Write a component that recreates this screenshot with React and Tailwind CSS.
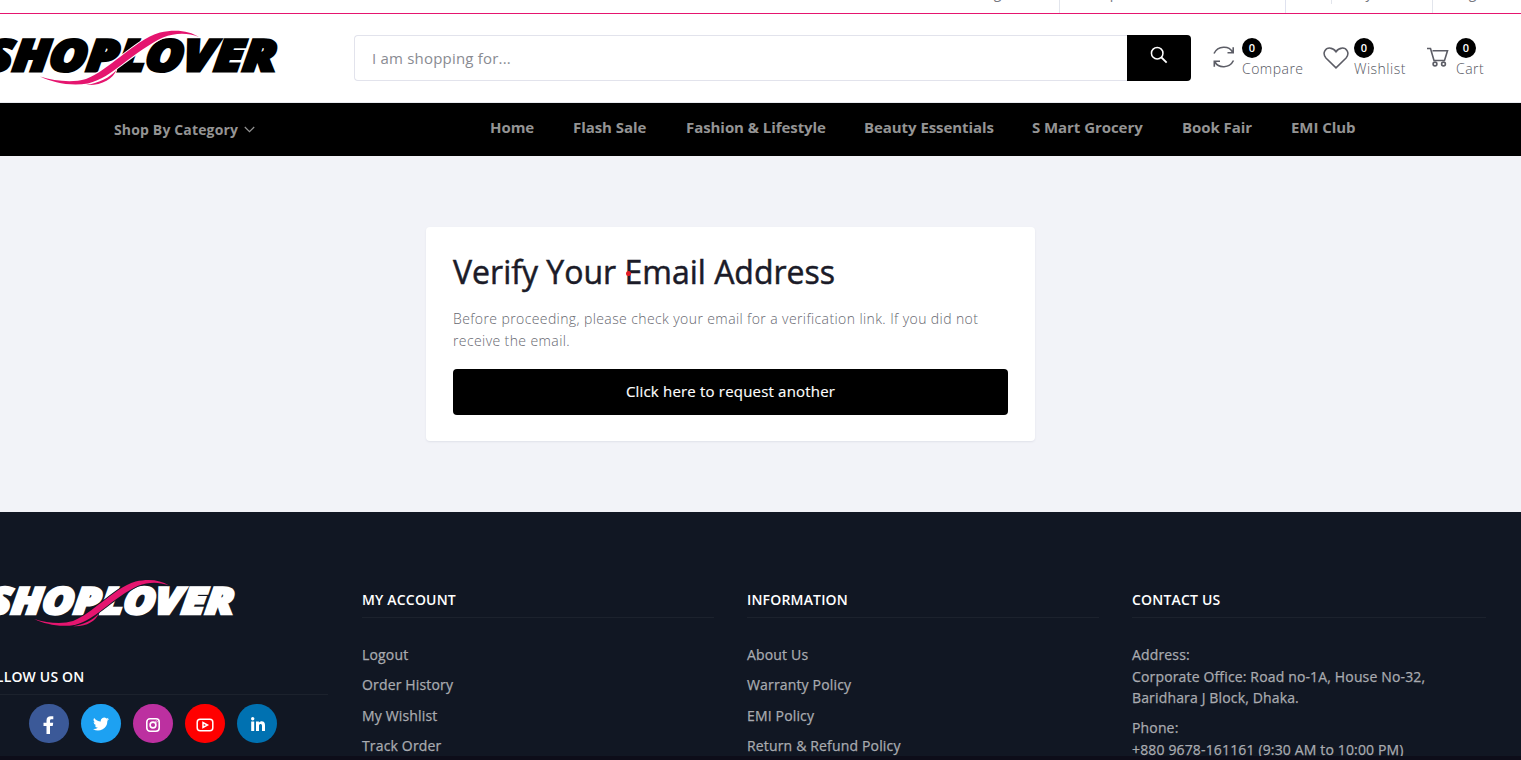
import React from "react";

const nav = [
  ["Home", "w-[83px]"],
  ["Flash Sale", "w-[113px]"],
  ["Fashion & Lifestyle", "w-[178px]"],
  ["Beauty Essentials", "w-[168px]"],
  ["S Mart Grocery", "w-[150px]"],
  ["Book Fair", "w-[109px]"],
  ["EMI Club", "w-[80px]"],
];

function Logo({ className, fill, gap }) {
  return (
    <svg viewBox="-30 0 310 60" className={className} preserveAspectRatio="none">
      <g transform="translate(0 46) skewX(-6)">
        <text
          x="-16" y="-0.8" textLength="291" lengthAdjust="spacingAndGlyphs"
          fontFamily="Open Sans" fontWeight="800" fontStyle="italic" fontSize="43.5"
          fill={fill} stroke={fill} strokeWidth="3.2" strokeLinejoin="miter"
        >SHOPLOVER</text>
      </g>
      <path d="M40 50.500C55 55 72 57 86 53C98 48.500 109 39 120 31C134 20.500 146 10.500 160 6.500C176 2.800 190 5 199 11C187 6.500 175 7 163 11.500C149 18 136 28 122 38.500C111 47 101 54 88 57.500C70 60.500 53 56.500 40 50.500Z" fill="#e5156f" stroke={gap} strokeWidth="2" paintOrder="stroke" />
      <path d="M86 59C98 57.500 110 51.500 116.500 44C113 53 101 60 86 59Z" fill="#e5156f" stroke={gap} strokeWidth="1.2" paintOrder="stroke" />
    </svg>
  );
}

function Action({ icon, label, className }) {
  return (
    <div className={`flex shrink-0 ${className}`}>
      {icon}
      <div className="flex flex-col items-start">
        <span className="flex h-5 w-5 items-center justify-center rounded-full bg-black text-[11px] font-semibold text-white">0</span>
        <span className="text-[14px] leading-[21px] font-light tracking-[0.48px] text-[#55575f]">{label}</span>
      </div>
    </div>
  );
}

const stroke = { fill: "none", stroke: "#5c5d66", strokeWidth: 1.6 };

function Column({ title, className, children }) {
  return (
    <div className={`shrink-0 ${className}`}>
      <h4 className="flex h-[38px] items-center border-b border-[#1c222d] pt-[1px] text-[14px] font-semibold tracking-[0.18px] text-white">{title}</h4>
      {children}
    </div>
  );
}

function Links({ items }) {
  return (
    <ul className="pt-[21px] text-[14px] tracking-[0.16px] text-[#a9abb0] [-webkit-text-stroke:0.25px_#a9abb0]">
      {items.map((t) => <li key={t} className="flex h-[30.45px] items-center">{t}</li>)}
    </ul>
  );
}

export default function App() {
  return (
    <div className="flex h-[760px] w-[1521px] flex-col overflow-hidden bg-[#f2f3f8] font-['Open_Sans',sans-serif]">
      <div className="h-[14px] shrink-0 overflow-hidden border-b border-[#e5156f] bg-white">
        <div className="flex h-[13px] pl-[976px] text-[14px] text-[#77787f]">
          <div className="w-[84px] border-r border-[#e2e5ec]"><span className="-mt-[18px] block pl-[2px]">Login</span></div>
          <div className="w-[226px] border-r border-[#dfe2ef]"><span className="-mt-[18px] block pl-[28px]">Help line</span></div>
          <div className="flex w-[147px] border-r border-[#e2e5ec]"><div className="h-1 w-[46px] border-r border-[#e2e5ec]" /><span className="-mt-[18px] block pl-[21px]">My Panel</span></div>
          <span className="-mt-[18px] block pl-[20px]">Logout</span>
        </div>
      </div>
      <header className="flex h-[88px] shrink-0 bg-white">
        <Logo className="-ml-[30px] mt-[12px] h-[60px] w-[310px] shrink-0" fill="#000" gap="#fff" />
        <div className="mt-[21px] ml-[74px] flex h-[46px] w-[837px] shrink-0">
          <div className="flex flex-1 items-center rounded-l border border-r-0 border-[#e2e3ec] pl-[17px] text-[15px] tracking-[0.2px] text-[#898b92]">I am shopping for...</div>
          <button className="flex w-16 items-center justify-center rounded-r bg-black pb-[6px]">
            <svg width="18" height="18" viewBox="0 0 20 20" fill="none" stroke="#fff" strokeWidth="1.7"><circle cx="8" cy="8" r="6.4" /><path d="M12.500 12.500L18.500 18.500" strokeWidth="2" /></svg>
          </button>
        </div>
        <div className="flex pt-[24px]">
          <Action className="ml-[20px] w-[112px]" label="Compare" icon={
            <svg className="mt-[7px] ml-[1px] mr-[6px] shrink-0" width="24" height="24" viewBox="0 0 24 24" {...stroke}><path d="M2 8.500C6 0.500 17 0.500 20.500 7M21.200 2.300V7.700H15.500M21.500 15.500C17.500 23.500 6.500 23.500 3 17M2.300 21.700V16.300H8" /></svg>} />
          <Action className="w-[103px]" label="Wishlist" icon={
            <svg className="mt-[8px] mr-[5px] shrink-0" width="26" height="24" viewBox="0 0 27 25" {...stroke}><path d="M13.500 22.800L3 12.500C-1.500 7 3 1.700 7.500 2.200C11 2.500 12.500 4.500 13.500 6C14.500 4.500 16 2.500 19.500 2.200C24 1.700 28.500 7 24 12.500Z" /></svg>} />
          <Action className="" label="Cart" icon={
            <svg className="mt-[9px] mr-[7px] ml-[1px] shrink-0" width="22" height="21" viewBox="0 0 22 21" {...stroke}><path d="M0 1.500H3.500L7 13.500H17.500L20.500 3.700H5.500" /><circle cx="8" cy="17" r="1.900" /><circle cx="16.500" cy="17" r="1.900" /></svg>} />
        </div>
      </header>
      <nav className="flex h-[54px] shrink-0 border-t border-[#e8ebf0] bg-black text-[15px] font-bold text-[#949494]">
        <div className="flex w-[490px] shrink-0 items-center gap-[6px] pl-[114px] text-[14px] tracking-[0.15px]">Shop By Category
          <svg width="11" height="7" viewBox="0 0 11 7" fill="none" stroke="#949494" strokeWidth="1.2"><path d="M.8 1L5.5 5.700L10.200 1" /></svg>
        </div>
        <div className="flex items-center pb-1 tracking-[-0.06px]">{nav.map(([t, w]) => <span key={t} className={`shrink-0 whitespace-nowrap ${w}`}>{t}</span>)}</div>
      </nav>
      <main className="h-[356px] shrink-0 pt-[71px] pl-[426px]">
        <section className="h-[214px] w-[609px] rounded bg-white px-[27px] pt-[25px] shadow-[0_1px_2px_#dfe1e9]">
          <div className="relative">
            <h1 className="text-[32px] leading-[40px] font-normal text-[#1b1b28] [-webkit-text-stroke:0.5px_#1b1b28]">Verify Your Email Address</h1>
            <span className="absolute top-[19px] left-[173px] h-[5px] w-[5px] rounded-full bg-[#e41b23]" />
          </div>
          <p className="mt-[16px] w-[545px] text-[14px] leading-[22px] font-light tracking-[0.4px] text-[#66676f]">Before proceeding, please check your email for a verification link. If you did not receive the email.</p>
          <button className="mt-[17px] h-[46px] w-[555px] rounded bg-black pb-[2px] text-[15px] tracking-[0.19px] text-white [-webkit-text-stroke:0.15px_white]">Click here to request another</button>
        </section>
      </main>
      <footer className="flex h-[244px] shrink-0 overflow-hidden bg-[#111723]">
        <div className="w-[362px] shrink-0">
          <Logo className="mt-[64px] -ml-[25px] h-[51px] w-[262px]" fill="#fff" gap="#111723" />
          <div className="mt-[30px] -ml-[23px] flex h-[38px] w-[351px] items-center border-b border-[#1c222d] pt-[1px] text-[14px] font-semibold tracking-[0.18px] text-white">FOLLOW US ON</div>
          <div className="mt-[9px] ml-[29px] flex gap-3">
            <span className="flex h-[39px] w-10 items-center justify-center rounded-full bg-[#3b5998] pt-[2px]"><svg width="12" height="18" viewBox="0 0 12 18" fill="#fff"><path d="M3.5 18V10H.5V6.8H3.5V4.5C3.5 1.5 5.2.2 7.7.2H10.3V3.2H8.6C7.4 3.2 7 3.8 7 4.8V6.8H10.2L9.7 10H7V18Z" /></svg></span>
            <span className="flex h-[39px] w-10 items-center justify-center rounded-full bg-[#1da1f2] pt-px"><svg width="16" height="16" viewBox="0 0 24 24" fill="#fff"><path d="M24 4.6a10 10 0 01-2.8.8 5 5 0 002.1-2.7 10 10 0 01-3.1 1.2 4.9 4.9 0 00-8.4 4.5A14 14 0 011.7 3.1a4.9 4.9 0 001.5 6.6 5 5 0 01-2.2-.6 4.9 4.9 0 003.9 4.9 5 5 0 01-2.2.1 4.9 4.9 0 004.6 3.4A9.9 9.9 0 010 19.500a14 14 0 0021.5-12.4A10 10 0 0024 4.600z" /></svg></span>
            <span className="flex h-[39px] w-10 items-center justify-center rounded-full bg-[#bc30a0] pt-[2px]"><svg width="16" height="16" viewBox="0 0 16 16" fill="none" stroke="#fff" strokeWidth="1.6"><rect x="1.800" y="1.800" width="12.400" height="12.400" rx="3.2" /><circle cx="8" cy="8" r="2.900" /><circle cx="11.500" cy="4.500" r=".3" /></svg></span>
            <span className="flex h-[39px] w-10 items-center justify-center rounded-full bg-[#f00] pt-[2px]"><svg width="18" height="14" viewBox="0 0 18 14" fill="none" stroke="#fff" strokeWidth="1.500"><rect x="1.200" y="1.200" width="15.600" height="11.600" rx="3" /><path d="M7 4.500V9.500L11.500 7Z" /></svg></span>
            <span className="flex h-[39px] w-10 items-center justify-center rounded-full bg-[#0071b1] pt-px pl-px"><svg width="16" height="16" viewBox="0 0 16 16" fill="#fff"><circle cx="2.700" cy="2.700" r="1.700" /><path d="M1.200 5.500H4.200V15H1.200ZM6 5.500H8.900V6.800C10.400 4.500 15 4.600 15 9V15H12V9.800C12 7.200 9 7.300 9 9.800V15H6Z" /></svg></span>
          </div>
        </div>
        <div className="flex pt-[68px]">
          <Column title="MY ACCOUNT" className="mr-[33px] w-[352px]"><Links items={["Logout", "Order History", "My Wishlist", "Track Order"]} /></Column>
          <Column title="INFORMATION" className="mr-[33px] w-[352px]"><Links items={["About Us", "Warranty Policy", "EMI Policy", "Return & Refund Policy"]} /></Column>
          <Column title="CONTACT US" className="w-[354px]">
            <div className="pt-[26px] text-[14px] leading-[21.5px] tracking-[0.15px] whitespace-nowrap text-[#a9abb0] [-webkit-text-stroke:0.25px_#a9abb0]">
              <p>Address:<br />Corporate Office: Road no-1A, House No-32,<br />Baridhara J Block, Dhaka.</p>
              <p className="mt-[8.500px]">Phone:<br />+880 9678-161161 (9:30 AM to 10:00 PM)</p>
            </div>
          </Column>
        </div>
      </footer>
      <div className="h-1 shrink-0 bg-[#0d0d19]" />
    </div>
  );
}
